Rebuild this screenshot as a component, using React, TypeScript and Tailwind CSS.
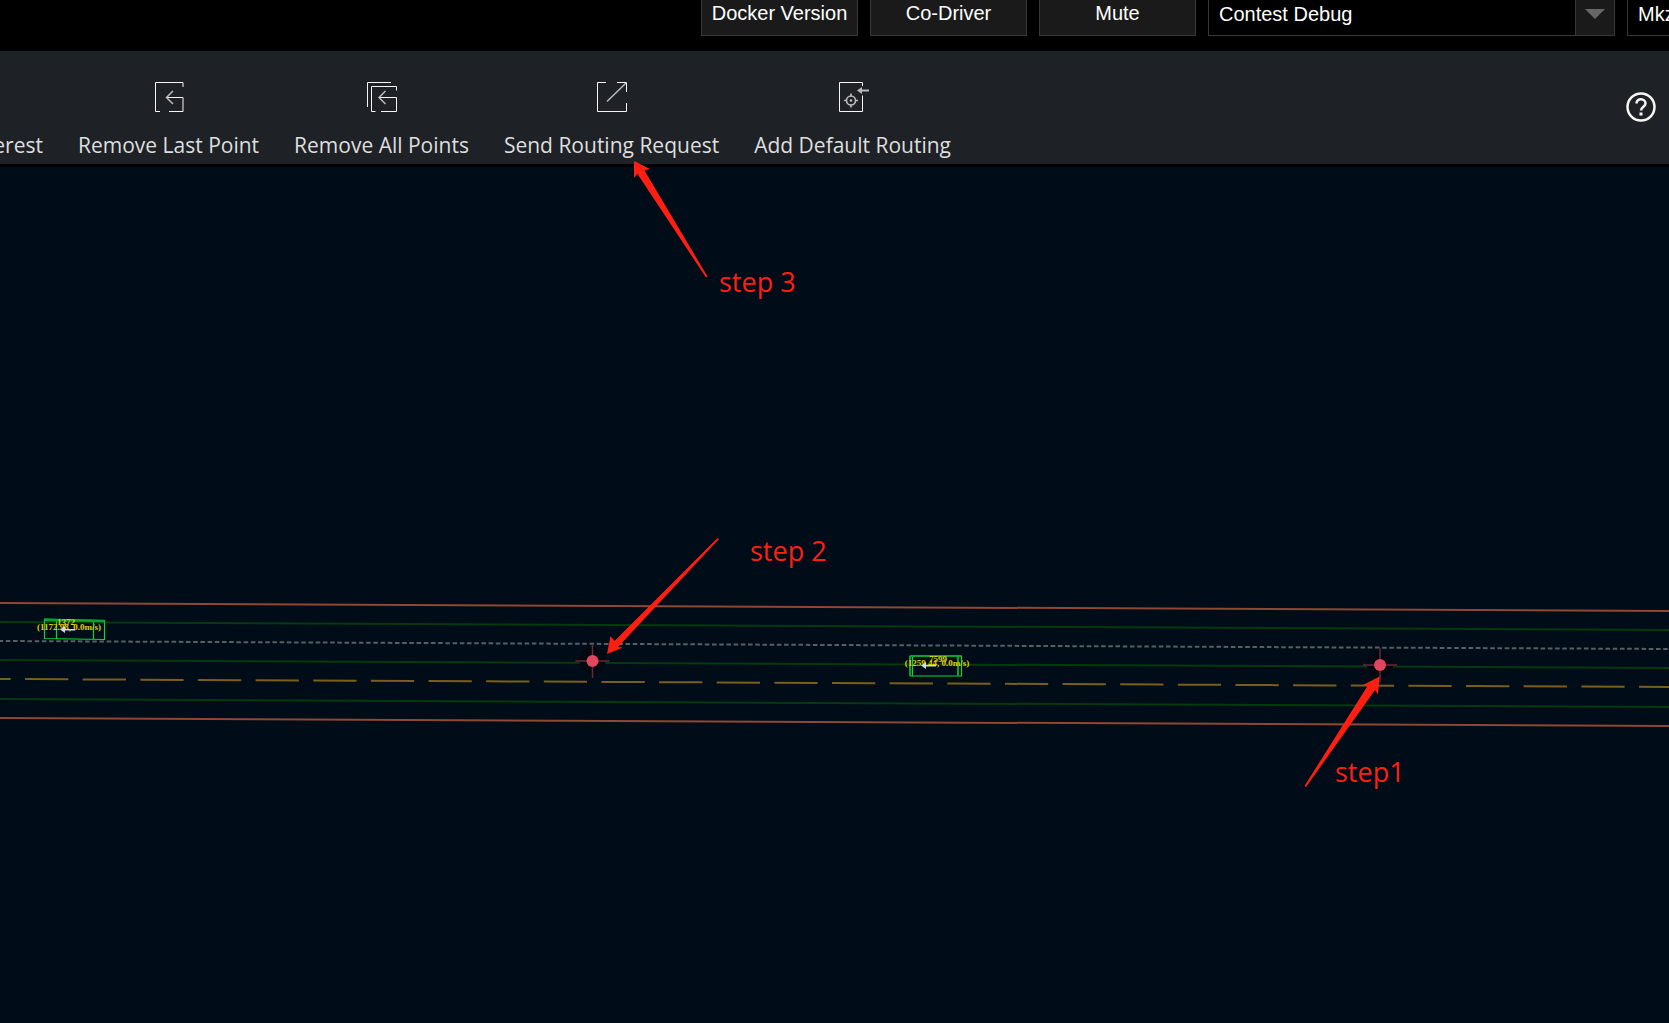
const ink = "#f5f5f5";
const glyph = "h-8 w-8";

function RemoveLastIcon() {
  return (
    <svg className={glyph} viewBox="0 0 32 32" fill="none" stroke={ink} aria-hidden="true">
      <path d="M30 6V1.5H2.500V30.5H7M16 30.5H30V16.5H13.500" />
      <path d="M20 10L13.500 16.5L20 23" stroke="#b9bbbc" strokeWidth="1.5" />
    </svg>
  );
}

function RemoveAllIcon() {
  return (
    <svg className={glyph} viewBox="0 0 32 32" fill="none" stroke={ink} aria-hidden="true">
      <path d="M25 1.5H1.5V26" />
      <path d="M30.5 9.5V5.5H5.5V30.5H9.5M15 30.5H30.5V16.5H13" />
      <path d="M19.5 10L13 16.5L19.5 23" stroke="#b9bbbc" strokeWidth="1.5" />
    </svg>
  );
}

function SendIcon() {
  return (
    <svg className={glyph} viewBox="0 0 32 32" fill="none" stroke={ink} aria-hidden="true">
      <path d="M10 1.5H1.5V30.5H30.5V22M21 1.5H30.5V11" />
      <path d="M30 2L11 20.5" stroke="#b9bbbc" strokeWidth="1.5" />
    </svg>
  );
}

function DefaultRoutingIcon() {
  return (
    <svg className={glyph} viewBox="0 0 32 32" fill="none" stroke={ink} aria-hidden="true">
      <path d="M25.500 5V1.5H2.500V30.5H25.500V14.5" />
      <g stroke="#b9bbbc" strokeWidth="1.6">
        <circle cx="14" cy="19.500" r="4.5" />
        <path d="M14 12.500V15.500M14 23.500V26.500M7 19.500H10M18 19.500H21" />
        <path d="M22 9.5H32" strokeWidth="2" />
      </g>
      <circle cx="14" cy="19.500" r="1.300" fill="#b9bbbc" stroke="none" />
      <path d="M20 9.5L25 6V13Z" fill="#b9bbbc" stroke="none" />
    </svg>
  );
}

const tools = [
  { label: "Remove Last Point", Icon: RemoveLastIcon },
  { label: "Remove All Points", Icon: RemoveAllIcon },
  { label: "Send Routing Request", Icon: SendIcon },
  { label: "Add Default Routing", Icon: DefaultRoutingIcon },
];

function HeaderSelect({ label, value, className }: { label: string; value: string; className: string }) {
  return (
    <div className={`relative h-10 shrink-0 border border-[#383838] bg-black ${className}`}>
      <select
        aria-label={label}
        className="h-full w-full appearance-none bg-black pb-1 pl-2.5 text-xl text-white"
      >
        <option>{value}</option>
      </select>
      <span className="pointer-events-none absolute inset-y-0 right-0 flex w-[39px] items-center justify-center border-l border-[#383838] bg-[#1a1a1a] pb-1">
        <svg className="h-2.5 w-5" viewBox="0 0 20 10" aria-hidden="true">
          <path d="M0 0H20L10 10Z" fill="#666" />
        </svg>
      </span>
    </div>
  );
}

function RoutePoint({ x, y }: { x: number; y: number }) {
  return (
    <g>
      <circle cx={x} cy={y} r="13" fill="#02080f" />
      <path d={`M${x - 17} ${y}h34M${x} ${y - 17}v34`} stroke="#6b2637" strokeWidth="1.5" />
      <circle cx={x} cy={y} r="6" fill="#e0465e" />
    </g>
  );
}

const lanes = [
  { y: 603, color: "#8f4833", dash: undefined, offset: 0 },
  { y: 622, color: "#053a0e", dash: undefined, offset: 0 },
  { y: 641, color: "#565e66", dash: "4.6 2.606", offset: 1.4 },
  { y: 660, color: "#053a0e", dash: undefined, offset: 0 },
  { y: 679, color: "#7a5f1c", dash: "43.3 14.34", offset: 32.6 },
  { y: 699, color: "#053a0e", dash: undefined, offset: 0 },
  { y: 718, color: "#8f4833", dash: undefined, offset: 0 },
];

function RouteMap() {
  return (
    <svg
      className="block h-auto w-full overflow-visible"
      viewBox="0 167 1669 856"
      role="img"
      aria-label="Routing map"
    >
      {lanes.map((l) => (
        <path
          key={l.y}
          d={`M0 ${l.y}L1669 ${l.y + 8}`}
          stroke={l.color}
          strokeWidth="2"
          strokeDasharray={l.dash}
          strokeDashoffset={l.offset}
        />
      ))}
      <g fill="none" stroke="#0bd53c" strokeWidth="1.2">
        <path d="M44.5 619L104.5 620.5V639.5L44.5 638.5ZM56.5 619.5V639M93.5 620V639.5" />
        <path d="M44.5 620L104.5 621" strokeWidth="2.5" stroke="#08a232" />
        <path d="M910.5 656H961.5V676H910.5ZM912.5 656V676" />
        <path d="M910 656V676M958 656V676M910 656H961" strokeWidth="2" stroke="#08a232" />
      </g>
      <g className="font-['Liberation_Serif'] font-bold" fill="#e0d000" fontSize="9" textAnchor="middle">
        <text x="66" y="625">1372</text>
        <text x="69" y="630">(1172.98, 0.0m/s)</text>
        <text x="938" y="662">7599</text>
        <text x="937" y="666">(1259.44, 0.0m/s)</text>
      </g>
      <g fill="#d8d8d8">
        <path d="M60 629.5L65 626V629H75V630.500H65V633Z" />
        <path d="M921 665.5L926 662V665H936V666.500H926V669Z" />
      </g>
      <RoutePoint x={592.5} y={661} />
      <RoutePoint x={1380} y={665} />
      <g fill="#ff1f12">
        <path d="M634 161L650 169L644.500 170.500L707.500 276.500L706 277.500L637.500 174L634 178Z" />
        <path d="M607 654L610.500 636L614.500 641L717.500 538L719 539L618 647L623 647.500Z" />
        <path d="M1379.500 676.500L1378 694.500L1375 690L1306 787L1304.500 786L1367.500 686L1363 685Z" />
      </g>
      <g className="font-['Open_Sans',sans-serif]" fill="#ff1f12" fontSize="27">
        <text x="719" y="292">step 3</text>
        <text x="750" y="561">step 2</text>
        <text x="1335" y="782">step1</text>
      </g>
    </svg>
  );
}

export default function App() {
  return (
    <div className="flex min-h-screen flex-col overflow-hidden bg-[#000c17] font-['Liberation_Sans',sans-serif]">
      <header className="flex h-[51px] items-start justify-end gap-3 overflow-hidden bg-black text-xl text-white">
        {["Docker Version", "Co-Driver", "Mute"].map((t) => (
          <button
            key={t}
            type="button"
            className="-mt-1 h-10 w-[157px] shrink-0 whitespace-nowrap border border-[#383838] bg-[#1a1a1a] pb-1.5"
          >
            {t}
          </button>
        ))}
        <HeaderSelect label="Mode" value="Contest Debug" className="-mt-1 w-[407px]" />
        <HeaderSelect label="Vehicle" value="Mkz" className="-mt-1 -mr-[365px] w-[407px]" />
      </header>
      <nav
        aria-label="Routing tools"
        className="flex h-[116px] items-start border-b-3 border-black bg-[#1e2226] font-['Open_Sans',sans-serif] text-[21px]/7 text-[#dedede]"
      >
        <div className="flex gap-[35px] pt-[30px]">
          <button type="button" className="flex w-[43px] flex-col items-end pt-[50px]">
            erest
          </button>
          {tools.map(({ label, Icon }) => (
            <button key={label} type="button" className="flex flex-col items-center gap-[18px] whitespace-nowrap">
              <Icon />
              {label}
            </button>
          ))}
        </div>
        <button type="button" aria-label="Help" className="mt-10 mr-3 ml-auto">
          <svg className="h-8 w-8" viewBox="0 0 32 32" fill="none" stroke={ink} strokeWidth="2.5" aria-hidden="true">
            <circle cx="16" cy="16" r="13.500" />
            <path d="M11.500 12.500C11.500 6.500 20.500 7 20.500 12.500C20.500 15.500 16 16 16 19.500" />
            <path d="M16 21.500V24.500" strokeWidth="3" />
          </svg>
        </button>
      </nav>
      <main className="flex-1">
        <RouteMap />
      </main>
    </div>
  );
}
